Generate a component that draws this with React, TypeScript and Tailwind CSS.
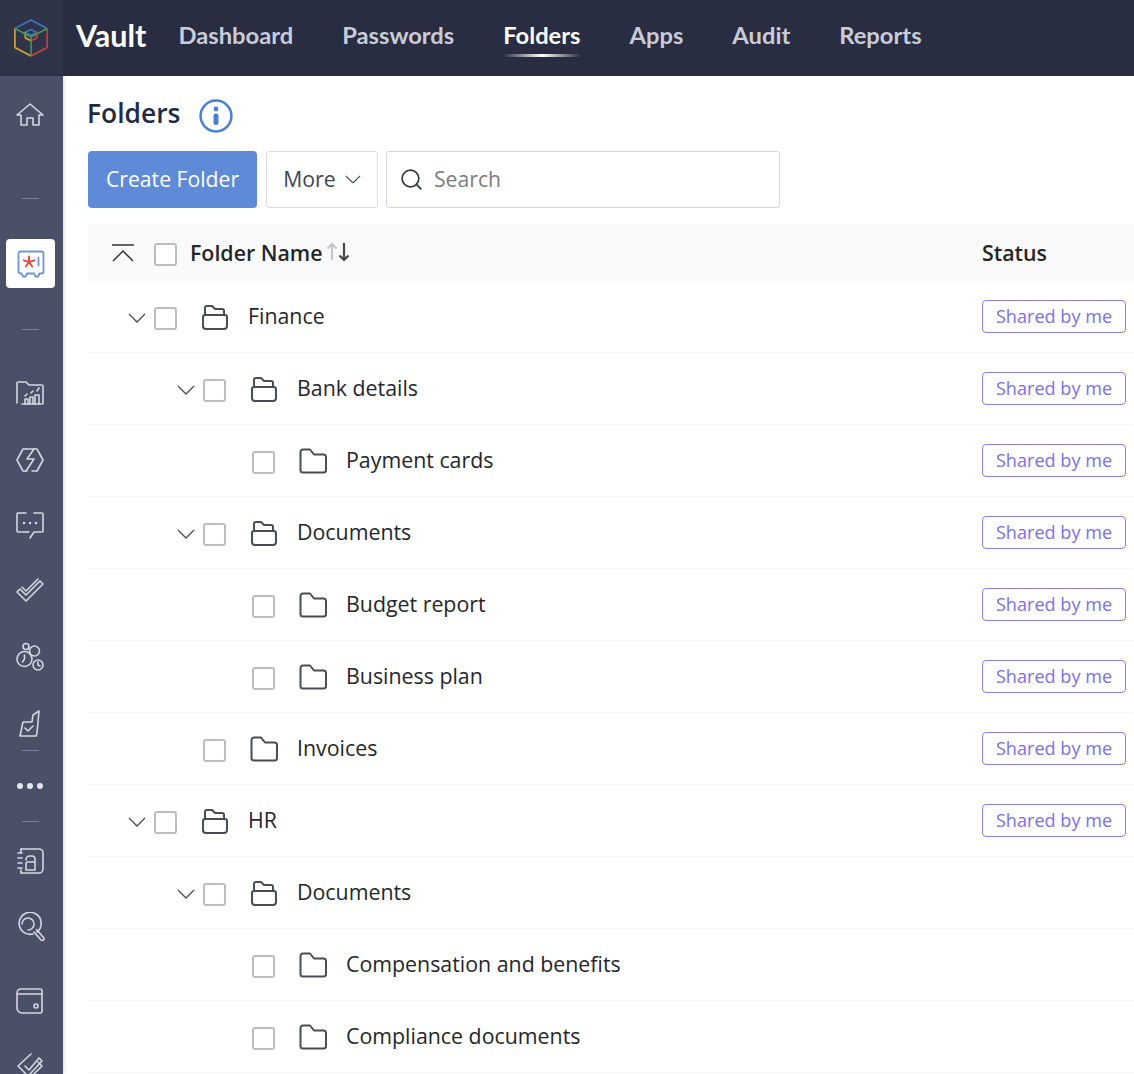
import { Search } from "lucide-react";

const navItems = ["Dashboard", "Passwords", "Folders", "Apps", "Audit", "Reports"];

type Row = { name: string; level: 0 | 1 | 2; open?: boolean; shared?: boolean };

const rows: Row[] = [
  { name: "Finance", level: 0, open: true, shared: true },
  { name: "Bank details", level: 1, open: true, shared: true },
  { name: "Payment cards", level: 2, shared: true },
  { name: "Documents", level: 1, open: true, shared: true },
  { name: "Budget report", level: 2, shared: true },
  { name: "Business plan", level: 2, shared: true },
  { name: "Invoices", level: 1, shared: true },
  { name: "HR", level: 0, open: true, shared: true },
  { name: "Documents", level: 1, open: true },
  { name: "Compensation and benefits", level: 2 },
  { name: "Compliance documents", level: 2 },
];

const indent = ["pl-[40px]", "pl-[89px]", "pl-[138px]"];

function Logo() {
  return (
    <svg width="36" height="40" viewBox="0 0 38 42" fill="none" strokeWidth="1.7" strokeLinejoin="round">
      <path d="M2 11 19 2l17 9" stroke="#3f74c4" />
      <path d="M13 15l6-3 6 3-6 3z" stroke="#3f74c4" />
      <path d="M2 11v20l17 9" stroke="#d9a72e" />
      <path d="M13 15v6l6 3" stroke="#d9a72e" />
      <path d="M36 11v20l-17 9" stroke="#c9413c" />
      <path d="M25 15v6l-6 3" stroke="#c9413c" />
      <path d="M2 11l17 9 17-9M19 20v20" stroke="#3e9a57" />
    </svg>
  );
}

function SideIcon({ children, className }: { children: React.ReactNode; className: string }) {
  return (
    <svg
      className={className}
      width="30"
      height="30"
      viewBox="0 0 30 30"
      fill="none"
      stroke="#d5d7de"
      strokeWidth="1.6"
      strokeLinecap="round"
      strokeLinejoin="round"
    >
      {children}
    </svg>
  );
}

function Chevron({ width, className }: { width: number; className?: string }) {
  return (
    <svg width={width} height={width * 0.56} viewBox="0 0 18 10" fill="none" stroke="currentColor" strokeWidth="1.300" className={className}>
      <path d="M1 1l8 8 8-8" />
    </svg>
  );
}

function Divider({ className }: { className: string }) {
  return <div className={`h-px w-[17px] shrink-0 bg-[#7c8096] ${className}`} />;
}

function Sidebar() {
  return (
    <aside className="flex w-[63px] shrink-0 flex-col items-center overflow-hidden bg-[#4b5069] pr-[3px] shadow-[1px_0_4px_rgba(0,0,0,0.15)]">
      <SideIcon className="mt-[24px] shrink-0">
        <path d="M2 15 15 4l13 11h-4v10h-6v-7h-6v7H6V15z" />
      </SideIcon>
      <Divider className="mt-[68px]" />
      <div className="ml-px mt-[40px] flex h-[49px] w-[49px] shrink-0 items-center justify-center rounded-[4px] bg-white">
        <svg width="28" height="28" viewBox="0 0 28 28" fill="none" strokeLinecap="round">
          <path
            d="M3.500 1.500h21a2 2 0 0 1 2 2v18a2 2 0 0 1-2 2h-2l-1.500 3h-2.500l-1.500-3h-7l-1.500 3H6l-1.500-3h-1a2 2 0 0 1-2-2v-18a2 2 0 0 1 2-2z"
            stroke="#6d96d8"
            strokeWidth="1.800"
          />
          <path d="M12 12V6.500M12 12l5.200-1.700M12 12l3.200 4.500M12 12l-3.200 4.500M12 12l-5.200-1.700" stroke="#e8483f" strokeWidth="1.900" />
          <path d="M21.500 8v7.500" stroke="#6d96d8" strokeWidth="1.800" />
        </svg>
      </div>
      <Divider className="mt-[41px]" />
      <SideIcon className="mt-[49px] shrink-0">
        <path d="M2 24V4a1 1 0 0 1 1-1h8l3 3h13a1 1 0 0 1 1 1v17a1 1 0 0 1-1 1H7" />
        <path d="M10 25v-5h3v5M15 25v-7h3v7M20 25v-9h4v9M10 17l2-2M16 14l2-2M22 12l2-3" />
      </SideIcon>
      <SideIcon className="mt-[36px] shrink-0">
        <path d="M11 4H8L2 15l6 11h4M19 4h3l6 11-6 11h-5" />
        <path d="M11 4h8l-7 10h7l-8 12" />
      </SideIcon>
      <SideIcon className="mt-[35px] shrink-0">
        <path d="M11 3H3a1 1 0 0 0-1 1v17a1 1 0 0 0 1 1h11M19 3h8a1 1 0 0 1 1 1v17a1 1 0 0 1-1 1h-8l-4 6" />
        <path d="M9 13h.01M15 13h.01M21 13h.01" strokeWidth="2.600" />
      </SideIcon>
      <SideIcon className="mt-[36px] shrink-0">
        <path d="M2 16l9 9L28 8l-3-3-14 14-6-6z" />
        <path d="M7 11l4 4L23 3" />
      </SideIcon>
      <SideIcon className="mt-[36px] shrink-0">
        <circle cx="11" cy="4.500" r="3" />
        <circle cx="19.500" cy="9" r="5" />
        <circle cx="9.500" cy="17" r="7.500" />
        <circle cx="23" cy="23" r="5" />
        <path d="M9.500 13v4l-2 3M23 20v3l2 1" />
      </SideIcon>
      <SideIcon className="mt-[36px] shrink-0">
        <path d="M5 28l3-14h9l1-7 6-4-2 22-1 3H5z" />
        <path d="M10 20l3 3 5-5" />
      </SideIcon>
      <Divider className="mt-[12px]" />
      <div className="mt-[29px] flex h-[12px] shrink-0 items-center gap-[4px]">
        <span className="h-[6px] w-[6px] rounded-full bg-[#e6e7ec]" />
        <span className="h-[6px] w-[6px] rounded-full bg-[#e6e7ec]" />
        <span className="h-[6px] w-[6px] rounded-full bg-[#e6e7ec]" />
      </div>
      <Divider className="mt-[29px]" />
      <SideIcon className="mt-[24px] shrink-0">
        <path d="M6 3h18a4 4 0 0 1 4 4v16a4 4 0 0 1-4 4H6" />
        <path d="M3 7h4M3 12h4M3 17h4M3 22h4M6 3v3M6 24v3" />
        <path d="M11 14a4 4 0 0 1 4-4h2a3 3 0 0 1 3 3v11h-9v-6a2 2 0 0 1 2-2h7" />
      </SideIcon>
      <SideIcon className="mt-[36px] shrink-0">
        <path d="M22 20a11 11 0 1 0-4 2" />
        <path d="M7 12a6 6 0 1 1 6 6" />
        <path d="M19 20l7 8a1.500 1.500 0 0 0 2.500-2.500l-7-8" />
      </SideIcon>
      <SideIcon className="mt-[44px] shrink-0">
        <path d="M6 3h19a2 2 0 0 1 2 2v20a2 2 0 0 1-2 2H7a5 5 0 0 1-5-5V7a4 4 0 0 1 4-4z" />
        <path d="M3 8h24" />
        <circle cx="21" cy="20" r="2" />
      </SideIcon>
      <SideIcon className="mt-[35px] shrink-0">
        <path d="M16 3l-13 12 12 12 12-12-4-4" />
        <path d="M10 15l4 4 10-12 3 3-13 14" />
      </SideIcon>
    </aside>
  );
}

function OpenFolder() {
  return (
    <svg width="26" height="27" viewBox="0 0 26 27" fill="none" stroke="#4a4d55" strokeWidth="2" strokeLinejoin="round" className="shrink-0">
      <path d="M3 11V4a2 2 0 0 1 2-2h5l3 3h7a2 2 0 0 1 2 2v4" />
      <path d="M3 11h20a2 2 0 0 1 2 2v9a3 3 0 0 1-3 3H4a3 3 0 0 1-3-3v-9a2 2 0 0 1 2-2z" />
    </svg>
  );
}

function ClosedFolder() {
  return (
    <svg width="28" height="27" viewBox="0 0 28 27" fill="none" stroke="#4a4d55" strokeWidth="2" strokeLinejoin="round" className="shrink-0">
      <path d="M1.500 4a2.500 2.500 0 0 1 2.500-2.500h7l4 5h9.500a2.500 2.500 0 0 1 2.500 2.500v13a2.500 2.500 0 0 1-2.500 2.500H4A2.500 2.500 0 0 1 1.500 22z" />
    </svg>
  );
}

function Checkbox({ className }: { className?: string }) {
  return <span className={`block h-[23px] w-[23px] shrink-0 rounded-[3px] border-2 border-[#bdbdbd] bg-white ${className ?? ""}`} />;
}

function FolderRow({ row }: { row: Row }) {
  return (
    <div className="flex h-[72px] items-center border-b border-[#f6f6f6] pr-[8px]">
      <div className={`flex flex-1 items-center ${indent[row.level]}`}>
        <span className="mr-[8px] mt-[4px] flex h-[20px] w-[18px] shrink-0 items-center justify-center text-[#4a4d55]">
          {row.open && <Chevron width={18} />}
        </span>
        <Checkbox className="mt-[4px]" />
        <span className="ml-[25px] mt-[2px] flex w-[26px] shrink-0 items-center justify-center">
          {row.open ? <OpenFolder /> : <ClosedFolder />}
        </span>
        <span className="ml-[20px] text-[21.350px] text-[#24262b]">{row.name}</span>
      </div>
      {row.shared && (
        <span className="flex h-[33px] w-[144px] items-center justify-center rounded-[4px] border-[1.5px] border-[#8a80f5] text-[18.100px] text-[#7a70ee]">
          Shared by me
        </span>
      )}
    </div>
  );
}

export default function App() {
  return (
    <div className="flex h-[1074px] w-full flex-col overflow-hidden bg-white font-['Open_Sans',sans-serif]">
      <header className="flex h-[76px] shrink-0 items-center bg-[#282d42]">
        <div className="flex h-full w-[63px] shrink-0 items-center justify-center bg-[#2f3449] pr-[1px]">
          <Logo />
        </div>
        <span className="ml-[13px] pb-[4px] font-['Lato',sans-serif] text-[30.500px] font-bold text-white">Vault</span>
        <nav className="ml-[32px] flex h-full items-center gap-[49px] pb-[4px] font-['Lato',sans-serif]">
          {navItems.map((item) => (
            <a
              key={item}
              className={`relative text-[23.730px] font-bold ${item === "Folders" ? "text-white" : "text-[#c9ccd7]"}`}
            >
              {item}
              {item === "Folders" && (
                <span className="absolute -bottom-[3px] left-0 h-[3px] w-full bg-gradient-to-r from-transparent via-white to-transparent" />
              )}
            </a>
          ))}
        </nav>
      </header>
      <div className="flex min-h-0 flex-1">
        <Sidebar />
        <main className="min-w-0 flex-1 pl-[25px]">
          <div className="mt-[17px] flex h-[44px] items-center">
            <h1 className="-ml-px pb-[2px] text-[26.400px] font-semibold text-[#1f2b45]">Folders</h1>
            <svg width="34" height="34" viewBox="0 0 34 34" fill="none" className="ml-[19px] mt-[2px]">
              <circle cx="17" cy="17" r="15.400" stroke="#4a7fd8" strokeWidth="2.500" />
              <circle cx="17" cy="10" r="2.400" fill="#4a7fd8" />
              <rect x="14.500" y="14.500" width="5" height="11.500" rx="2.200" fill="#4a7fd8" />
            </svg>
          </div>
          <div className="mt-[14px] flex h-[57px] items-stretch">
            <button className="w-[169px] rounded-[4px] bg-[#5f8ad8] pb-[1px] text-[21.200px] text-white">Create Folder</button>
            <button className="ml-[9px] flex w-[112px] items-center justify-center gap-[9px] rounded-[3px] border border-[#dfdfe3] pb-[1px] text-[21.200px] text-[#3d4558]">
              More
              <Chevron width={16} />
            </button>
            <div className="ml-[8px] flex w-[394px] items-center rounded-[3px] border border-[#d9d9dd] pb-[1px] pl-[12px]">
              <Search size={25} strokeWidth={1.600} className="text-[#33363d]" />
              <span className="ml-[10px] text-[21.200px] text-[#7c7c7c]">Search</span>
            </div>
          </div>
          <div className="mt-[16px] flex h-[57px] items-center bg-[#fafafa]">
            <svg width="24" height="20" viewBox="0 0 24 20" fill="none" stroke="#33363d" strokeWidth="1.500" className="ml-[23px] mt-[1px] shrink-0">
              <path d="M1 2h22M2 18 12 8l10 10" />
            </svg>
            <Checkbox className="ml-[19px] mt-[3px]" />
            <span className="ml-[13px] pt-[2px] text-[21.350px] font-semibold text-[#24262b]">Folder Name</span>
            <svg width="24" height="20" viewBox="0 0 24 20" fill="none" strokeWidth="2.200" className="mb-[1px] ml-[4px] shrink-0">
              <path d="M6 18V2M1.500 6.500 6 2l4.500 4.500" stroke="#c5c5c5" />
              <path d="M18 1v17M13.500 13.500 18 18l4.500-4.500" stroke="#44474f" />
            </svg>
            <span className="ml-auto w-[152px] pt-[2px] text-[21.350px] font-semibold text-[#24262b]">Status</span>
          </div>
          {rows.map((row, i) => (
            <FolderRow key={i} row={row} />
          ))}
        </main>
      </div>
    </div>
  );
}
